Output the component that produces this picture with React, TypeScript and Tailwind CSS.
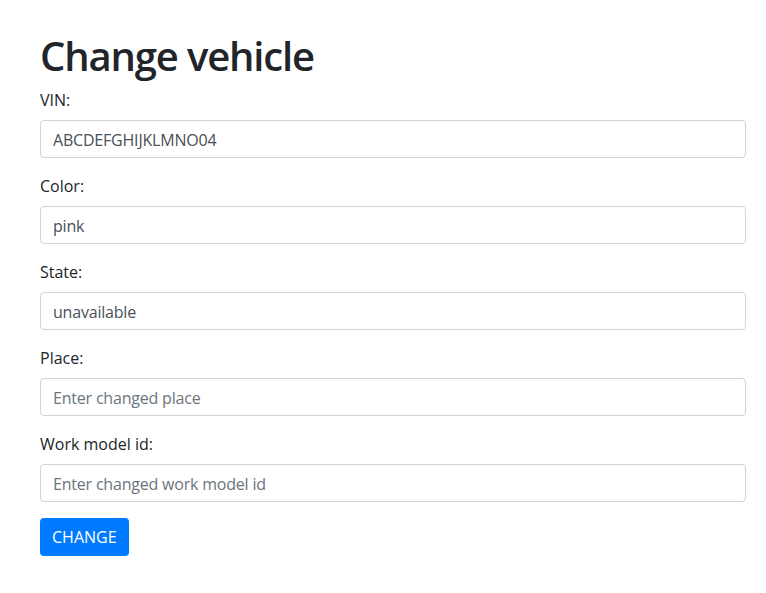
const fields = [
  { label: 'VIN:', value: 'ABCDEFGHIJKLMNO04', placeholder: 'Enter changed VIN' },
  { label: 'Color:', value: 'pink', placeholder: 'Enter changed color' },
  { label: 'State:', value: 'unavailable', placeholder: 'Enter changed state' },
  { label: 'Place:', value: '', placeholder: 'Enter changed place' },
  { label: 'Work model id:', value: '', placeholder: 'Enter changed work model id' },
]

export default function App() {
  return (
    <div className="min-h-[593px] bg-white pl-10 pr-5 pt-8 text-base leading-6 text-[#212529] font-['Open_Sans',sans-serif]">
      <h1 className="mb-2 text-[40px] font-semibold leading-[48px] tracking-[-1.15px]">Change vehicle</h1>
      <form onSubmit={(e) => e.preventDefault()}>
        {fields.map((f) => (
          <div key={f.label} className="mb-4">
            <label className="mb-2 inline-block">{f.label}</label>
            <input
              type="text"
              defaultValue={f.value}
              placeholder={f.placeholder}
              className="block h-[38px] w-full rounded border border-[#ced4da] bg-white px-3 pt-1.5 pb-[5px] tracking-[-0.2px] text-[#495057] outline-none placeholder:text-[#6c757d]"
            />
          </div>
        ))}
        <button
          type="submit"
          className="h-[38px] rounded bg-[#007bff] px-3 py-1.5 text-white"
        >
          CHANGE
        </button>
      </form>
    </div>
  )
}
